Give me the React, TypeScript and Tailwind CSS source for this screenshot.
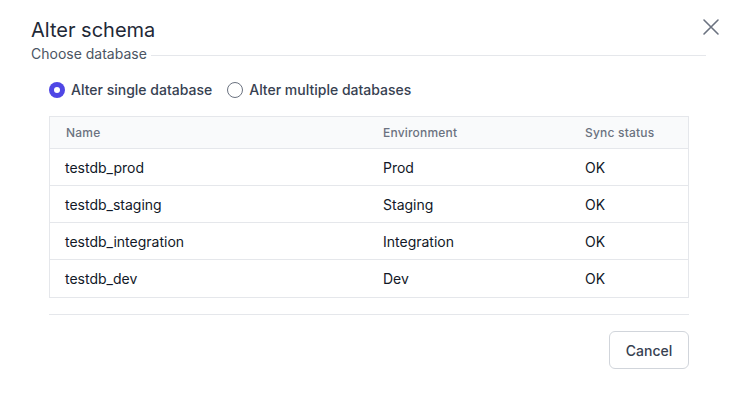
import React from "react";

const rows = [
  { name: "testdb_prod", env: "Prod", status: "OK" },
  { name: "testdb_staging", env: "Staging", status: "OK" },
  { name: "testdb_integration", env: "Integration", status: "OK" },
  { name: "testdb_dev", env: "Dev", status: "OK" },
];

export default function App() {
  return (
    <div className="w-[730px] h-[400px] bg-white relative overflow-hidden" style={{ fontFamily: "Inter, 'Noto Sans', sans-serif" }}>
      <div className="pl-[31px] pr-[24px] pt-[17px]">
        <div className="flex items-start justify-between">
          <h1 className="text-[20px] leading-[26px] text-[#1f2937] font-normal">Alter schema</h1>
          <button className="text-[#6b7280] mt-[1px] mr-[-14px]">
            <svg width="18" height="18" viewBox="0 0 18 18" fill="none" stroke="currentColor" strokeWidth="1.6" strokeLinecap="round">
              <path d="M2 2L16 16M16 2L2 16" />
            </svg>
          </button>
        </div>
        <div className="flex items-center mt-[1px]">
          <span className="text-[14px] leading-[20px] text-[#4b5563]">Choose database</span>
          <div className="flex-1 h-px bg-[#e5e7eb] ml-[4px] mt-[3px]"></div>
        </div>
      </div>
      <div className="pl-[49px] pr-[41px]">
        <div className="flex items-center mt-[16px] text-[14px] leading-[20px] text-[#374151] font-medium">
          <label className="flex items-center">
            <span className="w-4 h-4 rounded-full bg-[#4f46e5] flex items-center justify-center">
              <span className="w-[6px] h-[6px] rounded-full bg-white"></span>
            </span>
            <span className="ml-[6px]">Alter single database</span>
          </label>
          <label className="flex items-center ml-[15px]">
            <span className="w-4 h-4 rounded-full border border-[#6b7280] bg-white"></span>
            <span className="ml-[6px]">Alter multiple databases</span>
          </label>
        </div>
        <div className="mt-[16px] border border-[#e5e7eb] w-[640px]">
          <div className="flex h-[32px] items-center bg-[#f9fafb] border-b border-[#e5e7eb] text-[12px] font-medium text-[#6b7280] tracking-[0.2px]">
            <div className="w-[318px] pl-[16px]">Name</div>
            <div className="w-[202px] pl-[15px]">Environment</div>
            <div className="flex-1 pl-[15px]">Sync status</div>
          </div>
          {rows.map((r, i) => (
            <div key={r.name} className={`flex h-[37px] items-center text-[14px] text-[#111827] ${i < rows.length - 1 ? "border-b border-[#e5e7eb]" : ""}`}>
              <div className="w-[318px] pl-[15px]">{r.name}</div>
              <div className="w-[202px] pl-[15px]">{r.env}</div>
              <div className="flex-1 pl-[15px]">{r.status}</div>
            </div>
          ))}
        </div>
        <div className="w-[640px] h-px bg-[#e5e7eb] mt-[16px]"></div>
        <div className="w-[640px] flex justify-end mt-[16px]">
          <button className="w-[80px] h-[38px] rounded-md border border-[#d1d5db] bg-white text-[14px] font-medium text-[#374151]">Cancel</button>
        </div>
      </div>
    </div>
  );
}
